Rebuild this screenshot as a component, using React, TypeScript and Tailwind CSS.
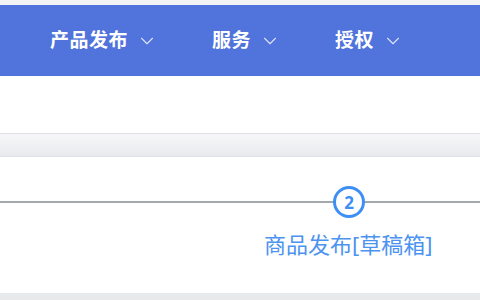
import { ChevronDown } from 'lucide-react';

const navItems = ['产品发布', '服务', '授权'];

export default function App() {
  return (
    <div
      className="w-[480px] h-[300px] overflow-hidden bg-white flex flex-col"
      style={{ fontFamily: '"Noto Sans", "Noto Sans CJK SC", sans-serif' }}
    >
      {/* top strip */}
      <div className="h-[5px] bg-[#f3f4f6] shrink-0" />

      {/* nav bar */}
      <nav className="h-[71px] bg-[#5073dc] flex items-center pl-[50px] gap-[54px] shrink-0">
        {navItems.map((item) => (
          <div key={item} className="flex items-center gap-[8px] text-white">
            <span className="text-[19px] font-bold tracking-[0.5px] leading-none">{item}</span>
            <ChevronDown className="w-[22px] h-[22px] text-white/80" strokeWidth={1.2} />
          </div>
        ))}
      </nav>

      {/* spacer */}
      <div className="h-[57px] bg-white shrink-0" />

      {/* gray toolbar band */}
      <div className="h-[24px] border-y border-[#dfe0e5] bg-gradient-to-b from-[#f7f7f9] to-[#e9eaed] shrink-0" />

      {/* steps */}
      <div className="flex-1 relative">
        <div className="absolute left-0 right-0 top-[44px] h-[2px] bg-[#a5a8ad]" />
        <div className="absolute left-[333px] top-[29px] w-[32px] h-[32px] rounded-full border-[3px] border-[#3d8ff5] bg-white flex items-center justify-center">
          <span className="text-[17px] font-bold text-[#3d8ff5] leading-none">2</span>
        </div>
        <div className="absolute left-[264px] top-[76px] text-[22px] text-[#4d93f0] leading-none whitespace-nowrap">
          商品发布[草稿箱]
        </div>
      </div>

      {/* bottom band */}
      <div className="h-[7px] bg-[#e8e9eb] shrink-0" />
    </div>
  );
}
